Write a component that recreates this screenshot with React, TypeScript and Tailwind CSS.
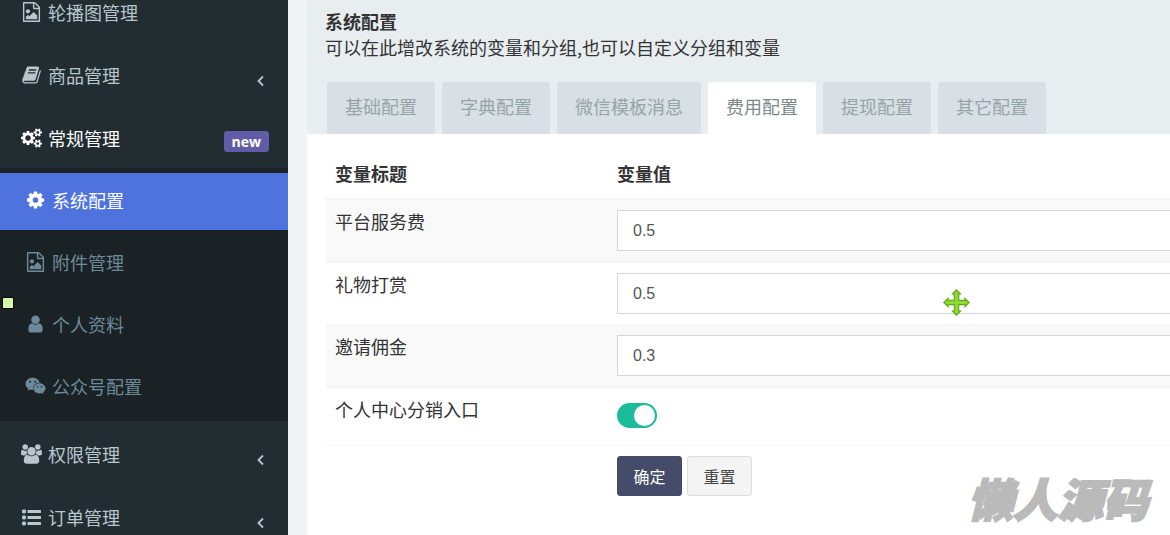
import { useState } from 'react';
import type { ReactNode } from 'react';
import { FaWeixin } from 'react-icons/fa';

const Glyph = ({ d, box = '0 0 1792 1792' }: { d: string; box?: string }) => (
  <svg viewBox={box} className="h-5 w-[21px] shrink-0" fill="currentColor" aria-hidden="true">
    <path d={d} />
  </svg>
);

const paths = {
  image:
    'M1596 380q28 28 48 76t20 88v1152q0 40-28 68t-68 28h-1344q-40 0-68-28t-28-68v-1600q0-40 28-68t68-28h896q40 0 88 20t76 48zm-444-244v376h376q-10-29-22-41l-313-313q-12-12-41-22zm384 1528v-1024h-416q-40 0-68-28t-28-68v-416h-768v1536h1280zm-128-448v320h-1024v-192l192-192 128 128 384-384zm-832-192q-80 0-136-56t-56-136 56-136 136-56 136 56 56 136-56 136-136 56z',
  book:
    'M1703 478q40 57 18 129l-275 906q-19 64-76.5 107.5t-122.5 43.5h-923q-77 0-148.5-53.5t-99.5-131.5q-24-67-2-127 0-4 3-27t4-37q1-8-3-21.5t-3-19.5q2-11 8-21t16.5-23.5 16.5-23.5q23-38 45-91.5t30-91.5q3-10 .5-30t-.5-28q3-11 17-28t17-23q21-36 42-92t25-90q1-9-2.5-32t.5-28q4-13 22-30.5t22-22.5q19-26 42.5-84.5t27.5-96.5q1-8-3-25.5t-2-26.5q2-8 9-18t18-23 17-21q8-12 16.5-30.5t15-35 16-36 19.5-32 26.5-23.5 36-11.5 47.5 5.5l-1 3q38-9 51-9h761q74 0 114 56t18 130l-274 906q-36 119-71.5 153.5t-128.5 34.5h-869q-27 0-38 15-11 16-1 43 24 70 144 70h923q29 0 56-15.5t35-41.5l300-987q7-22 5-57 38 15 59 43zm-1064 2q-4 13 2 22.5t20 9.5h608q13 0 25.5-9.5t16.5-22.5l21-64q4-13-2-22.5t-20-9.5h-608q-13 0-25.5 9.5t-16.5 22.5zm-83 256q-4 13 2 22.5t20 9.5h608q13 0 25.5-9.5t16.5-22.5l21-64q4-13-2-22.5t-20-9.5h-608q-13 0-25.5 9.5t-16.5 22.5z',
  cog:
    'M1152 896q0-106-75-181t-181-75-181 75-75 181 75 181 181 75 181-75 75-181zm512-109v222q0 12-8 23t-20 13l-185 28q-19 54-39 91 35 50 107 138 10 12 10 25t-9 23q-27 37-99 108t-94 71q-12 0-26-9l-138-108q-44 23-91 38-16 136-29 186-7 28-36 28h-222q-14 0-24.5-8.5t-11.5-21.5l-28-184q-49-16-90-37l-141 107q-10 9-25 9-14 0-25-11-126-114-165-168-7-10-7-23 0-12 8-23 15-21 51-66.5t54-70.5q-27-50-41-99l-183-27q-13-2-21-12.5t-8-23.5v-222q0-12 8-23t19-13l186-28q14-46 39-92-40-57-107-138-10-12-10-24 0-10 9-23 26-36 98.5-107.5t94.5-71.5q13 0 26 10l138 107q44-23 91-38 16-136 29-186 7-28 36-28h222q14 0 24.5 8.5t11.5 21.5l28 184q49 16 90 37l142-107q9-9 24-9 13 0 25 10 129 119 165 170 7 8 7 22 0 12-8 23-15 21-51 66.5t-54 70.5q26 50 41 98l183 28q13 2 21 12.5t8 23.5z',
  cogs:
    'M896 896q0-106-75-181t-181-75-181 75-75 181 75 181 181 75 181-75 75-181zm768 512q0-52-38-90t-90-38-90 38-38 90q0 53 37.5 90.5t90.5 37.5 90.5-37.5 37.5-90.5zm0-1024q0-52-38-90t-90-38-90 38-38 90q0 53 37.5 90.5t90.5 37.5 90.5-37.5 37.5-90.5zm-384 421v185q0 10-7 19.5t-16 10.5l-155 24q-11 35-32 76 34 48 90 115 7 11 7 20 0 12-7 19-23 30-82.5 89.5t-78.5 59.5q-11 0-21-7l-115-90q-37 19-77 31-11 108-23 155-7 24-30 24h-186q-11 0-20-7.5t-10-17.5l-23-153q-34-10-75-31l-118 89q-7 7-20 7-11 0-21-8-144-133-144-160 0-9 7-19 10-14 41-53t47-61q-23-44-35-82l-152-24q-10-1-17-9.5t-7-19.5v-185q0-10 7-19.5t16-10.5l155-24q11-35 32-76-34-48-90-115-7-11-7-20 0-12 7-20 22-30 82-89t79-59q11 0 21 7l115 90q34-18 77-32 11-108 23-154 7-24 30-24h186q11 0 20 7.5t10 17.5l23 153q34 10 75 31l118-89q8-7 20-7 11 0 21 8 144 133 144 160 0 8-7 19-12 16-42 54t-45 60q23 48 34 82l152 23q10 2 17 10.5t7 19.5zm640 533v140q0 16-149 31-12 27-30 52 51 113 51 138 0 4-4 7-122 71-124 71-8 0-46-47t-52-68q-20 2-30 2t-30-2q-14 21-52 68t-46 47q-2 0-124-71-4-3-4-7 0-25 51-138-18-25-30-52-149-15-149-31v-140q0-16 149-31 13-29 30-52-51-113-51-138 0-4 4-7 4-2 35-20t59-34 30-16q8 0 46 46.5t52 67.5q20-2 30-2t30 2q51-71 92-112l6-2q4 0 124 70 4 3 4 7 0 25-51 138 17 23 30 52 149 15 149 31zm0-1024v140q0 16-149 31-12 27-30 52 51 113 51 138 0 4-4 7-122 71-124 71-8 0-46-47t-52-68q-20 2-30 2t-30-2q-14 21-52 68t-46 47q-2 0-124-71-4-3-4-7 0-25 51-138-18-25-30-52-149-15-149-31v-140q0-16 149-31 13-29 30-52-51-113-51-138 0-4 4-7 4-2 35-20t59-34 30-16q8 0 46 46.5t52 67.5q20-2 30-2t30 2q51-71 92-112l6-2q4 0 124 70 4 3 4 7 0 25-51 138 17 23 30 52 149 15 149 31z',
  user:
    'M1280 1399q0 109-62.5 187t-150.5 78h-854q-88 0-150.5-78t-62.5-187q0-85 8.5-160.5t31.5-152 58.5-131 94-89 134.5-34.5q131 128 313 128t313-128q76 0 134.5 34.5t94 89 58.5 131 31.5 152 8.5 160.5zm-256-887q0 159-112.5 271.5t-271.5 112.5-271.5-112.5-112.5-271.5 112.5-271.5 271.5-112.5 271.5 112.5 112.5 271.5z',
  group:
    'M593 896q-162 5-265 128h-134q-82 0-138-40.5t-56-118.5q0-353 124-353 6 0 43.5 21t97.5 42.5 119 21.5q67 0 133-23-5 37-5 66 0 139 81 256zm1071 637q0 120-73 189.5t-194 69.5h-874q-121 0-194-69.5t-73-189.5q0-53 3.5-103.5t14-109 26.5-108.5 43-97.5 62-81 85.5-53.5 111.5-20q10 0 43 21.5t73 48 107 48 135 21.5 135-21.5 107-48 73-48 43-21.5q61 0 111.5 20t85.5 53.5 62 81 43 97.5 26.5 108.5 14 109 3.5 103.5zm-1024-1277q0 106-75 181t-181 75-181-75-75-181 75-181 181-75 181 75 75 181zm704 384q0 159-112.5 271.5t-271.5 112.5-271.5-112.5-112.5-271.5 112.5-271.5 271.5-112.5 271.5 112.5 112.5 271.5zm576 225q0 78-56 118.5t-138 40.5h-134q-103-123-265-128 81-117 81-256 0-29-5-66 66 23 133 23 59 0 119-21.5t97.5-42.5 43.5-21q124 0 124 353zm-128-609q0 106-75 181t-181 75-181-75-75-181 75-181 181-75 181 75 75 181z',
};

const subMenu = [
  { label: '系统配置', icon: <Glyph d={paths.cog} />, active: true },
  { label: '附件管理', icon: <Glyph d={paths.image} /> },
  { label: '个人资料', icon: <Glyph d={paths.user} box="-256 0 1792 1792" /> },
  { label: '公众号配置', icon: <FaWeixin className="h-5 w-[21px] shrink-0" /> },
];

const tabs = ['基础配置', '字典配置', '微信模板消息', '费用配置', '提现配置', '其它配置'];

const fields = [
  { id: 'service', label: '平台服务费', value: '0.5', row: 'bg-[#f9f9f9]', line: 'border-t-2' },
  { id: 'gift', label: '礼物打赏', value: '0.5', row: 'bg-white', line: 'border-t-2' },
  { id: 'invite', label: '邀请佣金', value: '0.3', row: 'bg-[#f9f9f9]', line: 'border-t' },
];

function MenuItem({ icon, label, active, badge }: { icon: ReactNode; label: string; active?: boolean; badge?: ReactNode }) {
  return (
    <a href="#" className={`flex h-[60px] items-center pl-[21px] pr-[19px] ${active ? 'text-white' : 'text-[#b8c7ce]'}`}>
      {icon}
      <span className="ml-[6px] flex-1">{label}</span>
      {badge}
    </a>
  );
}

const Arrow = () => (
  <svg viewBox="0 0 8 12" className="mr-[5px] mt-3 h-3 w-2" fill="none" stroke="currentColor" strokeWidth="1.8" aria-hidden="true">
    <path d="M7 1.500 2.500 6 7 10.500" />
  </svg>
);

const ListIcon = () => (
  <svg viewBox="0 0 21 20" className="h-5 w-[21px] shrink-0" fill="currentColor" aria-hidden="true">
    {[3, 9, 15].map((y) => (
      <g key={y}>
        <rect x="1" y={y - 0.5} width="4" height="4" rx="1.4" />
        <rect x="6.500" y={y} width="13.500" height="3" rx="0.4" />
      </g>
    ))}
  </svg>
);

function Sidebar() {
  return (
    <aside className="w-[288px] shrink-0 bg-[#222d32]">
      <nav className="-mt-[18px]">
        <ul className="flex flex-col gap-[3px]">
          <li><MenuItem icon={<Glyph d={paths.image} />} label="轮播图管理" /></li>
          <li><MenuItem icon={<Glyph d={paths.book} />} label="商品管理" badge={<Arrow />} /></li>
          <li>
            <MenuItem
              icon={<Glyph d={paths.cogs} box="0 0 1920 1792" />}
              label="常规管理"
              active
              badge={
                <span className="mt-[7px] rounded-[3px] bg-[#605ca8] px-2 font-['Open_Sans',sans-serif] text-sm font-bold leading-[21px] text-white">
                  new
                </span>
              }
            />
            <ul className="flex flex-col gap-[5px] bg-[#1a2226] py-[5px]">
              {subMenu.map((item) => (
                <li key={item.label}>
                  <a
                    href="#"
                    className={`flex h-[57px] items-center pb-[3px] pl-[25px] ${item.active ? 'bg-[#4e73df] text-white' : 'text-[#6c8a99]'}`}
                  >
                    {item.icon}
                    <span className="ml-[6px]">{item.label}</span>
                  </a>
                </li>
              ))}
            </ul>
          </li>
          <li><MenuItem icon={<Glyph d={paths.group} box="0 0 1920 1792" />} label="权限管理" badge={<Arrow />} /></li>
          <li><MenuItem icon={<ListIcon />} label="订单管理" badge={<Arrow />} /></li>
        </ul>
      </nav>
    </aside>
  );
}

export default function App() {
  const [tab, setTab] = useState('费用配置');
  const [entry, setEntry] = useState(true);

  return (
    <div className="relative flex h-screen overflow-hidden bg-[#f0f4f7] font-['Noto_Sans_CJK_SC',sans-serif] text-[18px] leading-[26px] text-[#333]">
      <Sidebar />

      <main className="ml-[19px] min-w-0 flex-1 overflow-hidden bg-white">
        <header className="bg-[#e8edf0] pl-[18px] pt-2">
          <h1 className="font-bold">系统配置</h1>
          <p>可以在此增改系统的变量和分组,也可以自定义分组和变量</p>
          <div role="tablist" className="ml-0.5 mt-[22px] flex gap-[7px]">
            {tabs.map((name) => (
              <button
                key={name}
                type="button"
                role="tab"
                aria-selected={tab === name}
                onClick={() => setTab(name)}
                className={`h-[52px] rounded-t-[3px] px-[18px] pb-1 ${tab === name ? 'bg-white text-[#7b8a8b]' : 'bg-[#d8dfe5] text-[#95a5a6]'}`}
              >
                {name}
              </button>
            ))}
          </div>
        </header>

        <form className="pl-[19px] pt-4" onSubmit={(e) => e.preventDefault()}>
          <table className="w-[calc(100%+20px)] table-fixed border-separate border-spacing-0 text-left">
            <thead>
              <tr>
                <th className="w-[281px] px-[9px] pb-3 pt-[10px] font-bold">变量标题</th>
                <th className="px-[10px] pb-3 pt-[10px] font-bold">变量值</th>
              </tr>
            </thead>
            <tbody>
              {fields.map((f) => (
                <tr key={f.id} className={f.row}>
                  <td className={`${f.line} border-[#f4f4f4] px-[9px] pt-2 align-top`}>
                    <label htmlFor={f.id}>{f.label}</label>
                  </td>
                  <td className={`${f.line} border-[#f4f4f4] p-[10px]`}>
                    <input
                      id={f.id}
                      type="text"
                      defaultValue={f.value}
                      className="block h-[41px] w-full border border-[#d2d6de] bg-white px-[15px] font-['Liberation_Sans',sans-serif] text-base text-[#555]"
                    />
                  </td>
                </tr>
              ))}
              <tr>
                <td className="h-[59px] border-t-2 border-[#f4f4f4] px-[9px] pt-2 align-top">
                  <label htmlFor="entry">个人中心分销入口</label>
                </td>
                <td className="border-t-2 border-[#f4f4f4] px-[10px] pb-0.5">
                  <label className="block h-[25px] w-10 cursor-pointer">
                    <input
                      id="entry"
                      type="checkbox"
                      role="switch"
                      checked={entry}
                      onChange={(e) => setEntry(e.target.checked)}
                      className="peer sr-only"
                    />
                    <span className="flex h-[25px] w-10 items-center rounded-full bg-gray-300 px-[2px] peer-checked:justify-end peer-checked:bg-[#1abc9c]">
                      <span className="h-[21px] w-[21px] rounded-full bg-white" />
                    </span>
                  </label>
                </td>
              </tr>
              <tr>
                <td className="border-t border-[#f4f4f4]" />
                <td className="border-t border-[#f4f4f4] p-[10px]">
                  <div className="flex gap-[5px] text-base">
                    <button type="submit" className="h-10 w-[65px] rounded-[3px] border border-[#444c69] bg-[#444c69] text-white">
                      确定
                    </button>
                    <button type="reset" className="h-10 w-[65px] rounded-[3px] border border-[#ddd] bg-[#f4f4f4] text-[#444]">
                      重置
                    </button>
                  </div>
                </td>
              </tr>
            </tbody>
          </table>
        </form>
      </main>

      {/* Floating marks */}
      <span className="absolute left-[2px] top-[297px] h-3 w-3 border border-black bg-[#d5f7a6]" />
      <svg viewBox="0 0 27 27" className="absolute left-[943px] top-[289px] h-[27px] w-[27px]" aria-hidden="true">
        <path
          d="M13.5 .8 17.500 5h-1.800v6.300H22V9.500l4.200 4-4.200 4v-1.800h-6.300V22h1.800l-4 4.200-4-4.200h1.800v-6.300H5v1.800l-4.200-4 4.200-4v1.800h6.300V5H9.500z"
          fill="#8edb30"
          stroke="#62aa1c"
          strokeWidth="1.200"
        />
      </svg>
      <span className="absolute bottom-[10px] right-[22px] text-[45px] font-black italic leading-[54px] text-[#bababa] [-webkit-text-stroke:2px_#bababa]">
        懒人源码
      </span>
    </div>
  );
}
